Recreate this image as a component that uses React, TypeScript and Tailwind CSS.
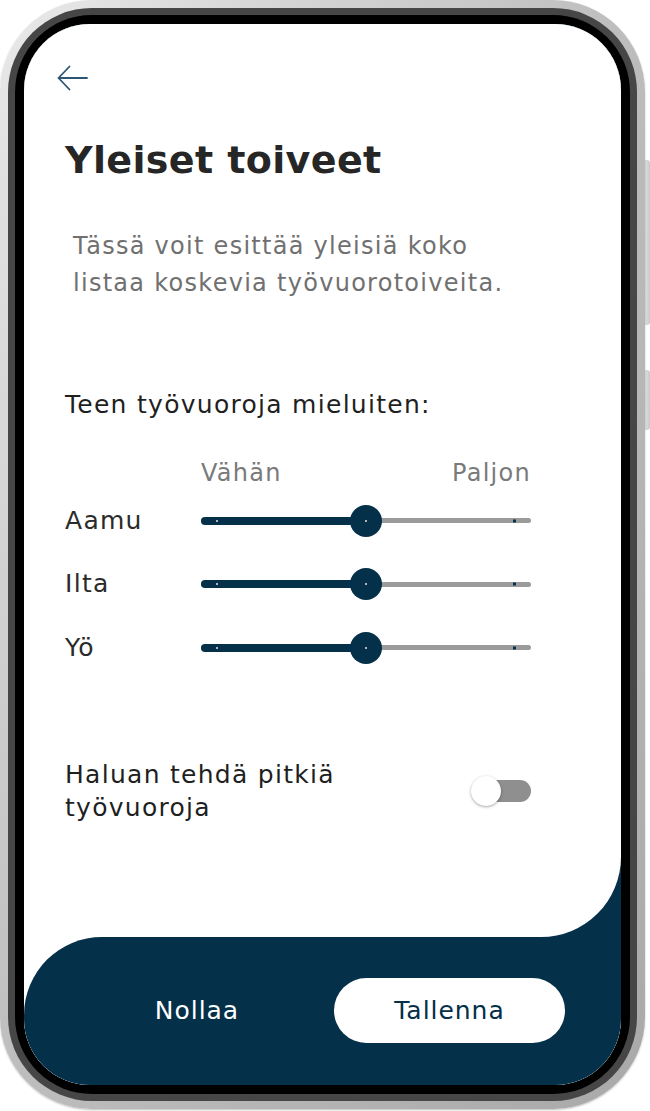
import { useState } from "react";

type SliderProps = { label: string; value: number };

function PrefSlider({ label, value }: SliderProps) {
  // value 0..1, track is 330px wide
  const fill = Math.round(330 * value);
  return (
    <div className="flex items-center h-[63.5px]">
      <span className="w-[136px] text-[25px] leading-[28px] text-[#2b2b2b]">{label}</span>
      <div className="relative w-[330px] h-8 flex items-center">
        <div className="w-full h-[5px] rounded-full bg-[#9b9b9b]" />
        <div
          className="absolute left-0 top-1/2 -translate-y-1/2 h-[8px] rounded-full bg-[#04304a]"
          style={{ width: fill }}
        />
        <span className="absolute left-[15px] top-1/2 -translate-y-1/2 w-[2px] h-[2px] bg-[#b5b5b5]" />
        <span className="absolute right-[15px] top-1/2 -translate-y-1/2 w-[3px] h-[3px] bg-[#04304a]" />
        <span
          className="absolute top-1/2 -translate-y-1/2 -translate-x-1/2 w-8 h-8 rounded-full bg-[#04304a] flex items-center justify-center"
          style={{ left: fill }}
        >
          <span className="w-[2px] h-[2px] bg-[#b5b5b5]" />
        </span>
      </div>
    </div>
  );
}

export default function App() {
  const [longShifts, setLongShifts] = useState(false);

  return (
    <div
      className="w-[650px] h-[1111px] bg-white tracking-[0.08em]"
      style={{ fontFamily: "'DejaVu Sans', 'Open Sans', sans-serif" }}
    >
      <div className="relative w-[645px] h-[1109px]">
        {/* side buttons */}
        <span className="absolute right-[-5px] top-[160px] w-[6px] h-[165px] rounded-r-[3px] bg-gradient-to-r from-[#e6e6e6] to-[#c9c9c9]" />
        <span className="absolute right-[-5px] top-[370px] w-[6px] h-[60px] rounded-r-[3px] bg-gradient-to-r from-[#e6e6e6] to-[#c9c9c9]" />

        {/* bezel */}
        <div className="relative w-full h-full rounded-[92px] p-[8px] bg-gradient-to-br from-[#e9e9e9] via-[#bdbdbd] to-[#a9a9a9] shadow-[0_1px_2px_rgba(0,0,0,0.25)]">
          <div className="w-full h-full rounded-[84px] p-[7px] bg-[#464646]">
            <div className="w-full h-full rounded-[77px] p-[9px] bg-black">
              {/* screen */}
              <div className="w-full h-full rounded-[66px] overflow-hidden flex flex-col bg-white">
                <div className="flex-1 bg-[#04304a]">
                  <div className="h-full bg-white rounded-br-[80px] pl-[41px] pr-[90px] pt-[41px]">
                    <button className="block -ml-[8px] text-[#2b5573]" aria-label="Takaisin">
                      <svg width="31" height="26" viewBox="0 0 31 26" fill="none">
                        <path
                          d="M30 13H1.5M12.5 1.5L1.5 13l11 11.5"
                          stroke="currentColor"
                          strokeWidth="1.8"
                          strokeLinecap="round"
                          strokeLinejoin="round"
                        />
                      </svg>
                    </button>

                    <h1 className="mt-[46px] text-[38px] leading-[46px] font-bold text-[#262626] tracking-[0.01em]">
                      Yleiset toiveet
                    </h1>

                    <p className="mt-[45px] ml-[8px] text-[24px] leading-[37px] text-[#707070]">
                      Tässä voit esittää yleisiä koko
                      <br />
                      listaa koskevia työvuorotoiveita.
                    </p>

                    <h2 className="mt-[88px] text-[25px] leading-[30px] text-[#1f1f1f]">
                      Teen työvuoroja mieluiten:
                    </h2>

                    <div className="mt-[39px] ml-[136px] flex justify-between text-[24px] leading-[28px] text-[#7a7a7a]">
                      <span>Vähän</span>
                      <span>Paljon</span>
                    </div>

                    <div className="mt-[2px]">
                      <PrefSlider label="Aamu" value={0.5} />
                      <PrefSlider label="Ilta" value={0.5} />
                      <PrefSlider label="Yö" value={0.5} />
                    </div>

                    <div className="mt-[78px] flex items-center justify-between">
                      <span className="text-[25px] leading-[33px] text-[#1f1f1f]">
                        Haluan tehdä pitkiä
                        <br />
                        työvuoroja
                      </span>
                      <button
                        onClick={() => setLongShifts((v) => !v)}
                        className="relative w-[60px] h-[32px] flex items-center"
                        aria-label="Pitkät työvuorot"
                      >
                        <span className="absolute right-0 w-[46px] h-[22px] rounded-full bg-[#8f8f8f]" />
                        <span
                          className={
                            "absolute w-[30px] h-[30px] rounded-full bg-white shadow-[0_1px_3px_rgba(0,0,0,0.35)] " +
                            (longShifts ? "left-[30px]" : "left-0")
                          }
                        />
                      </button>
                    </div>
                  </div>
                </div>

                {/* bottom bar */}
                <div className="bg-white">
                  <div className="h-[148px] rounded-tl-[78px] bg-[#04304a] flex items-start pt-[41px] tracking-[0.06em]">
                    <button className="ml-[98px] w-[150px] h-[65px] text-[25px] text-white">
                      Nollaa
                    </button>
                    <button className="ml-[62px] w-[231px] h-[65px] rounded-full bg-white text-[25px] text-[#04304a]">
                      Tallenna
                    </button>
                  </div>
                </div>
              </div>
            </div>
          </div>
        </div>
      </div>
    </div>
  );
}
